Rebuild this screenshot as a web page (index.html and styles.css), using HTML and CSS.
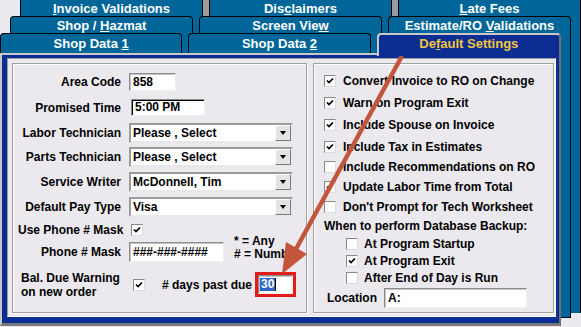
FILE: index.html
```html
<!DOCTYPE html>
<html lang="en">
<head>
  <meta charset="UTF-8" />
  <title>Default Settings</title>
  <link rel="stylesheet" href="styles.css">
</head>
<body>
  <div class="deck d1">
    <div class="tabs r1">
      <div class="tab"><u>I</u>nvoice Validations</div>
      <div class="tab">Dis<u>c</u>laimers</div>
      <div class="tab"><u>L</u>ate Fees</div>
    </div>
    <div class="sheet">
      <div class="deck d2">
        <div class="tabs r2">
          <div class="tab">Shop / <u>H</u>azmat</div>
          <div class="tab">Screen Vie<u>w</u></div>
          <div class="tab">Estimate/RO <u>V</u>alidations</div>
        </div>
        <div class="sheet sheet2">
          <div class="deck d3">
            <div class="tabs r3">
              <div class="tab">Shop Data <u>1</u></div>
              <div class="tab">Shop Data <u>2</u></div>
              <div class="tab active">De<u>f</u>ault Settings</div>
            </div>

            <div class="page">
              <div class="panel">
                <!-- left group -->
                <div class="group left">
                  <div class="lrow">
                    <span class="lab">Area Code</span>
                    <span class="field f-area">858</span>
                  </div>
                  <div class="lrow r-time">
                    <span class="lab">Promised Time</span>
                    <span class="field f-time">5:00 PM</span>
                  </div>
                  <div class="lrow r-labor">
                    <span class="lab">Labor Technician</span>
                    <span class="combo"><span>Please , Select</span><span class="drop"></span></span>
                  </div>
                  <div class="lrow r-parts">
                    <span class="lab">Parts Technician</span>
                    <span class="combo"><span>Please , Select</span><span class="drop"></span></span>
                  </div>
                  <div class="lrow r-next">
                    <span class="lab">Service Writer</span>
                    <span class="combo"><span>McDonnell, Tim</span><span class="drop"></span></span>
                  </div>
                  <div class="lrow r-next">
                    <span class="lab">Default Pay Type</span>
                    <span class="combo"><span>Visa</span><span class="drop"></span></span>
                  </div>
                  <div class="lrow r-use">
                    <span class="lab">Use Phone # Mask</span>
                    <span class="check"><svg viewBox="0 0 10 10"><path d="M2 4.5 L4 6.5 L8 2.5"/></svg></span>
                  </div>
                  <div class="lrow r-mask">
                    <span class="lab">Phone # Mask</span>
                    <span class="field f-mask">###-###-####</span>
                    <span class="notes">* = Any<br># = Number</span>
                  </div>
                  <div class="lrow r-bal">
                    <span class="lab">Bal. Due Warning<br>on new order</span>
                    <span class="check"><svg viewBox="0 0 10 10"><path d="M2 4.5 L4 6.5 L8 2.5"/></svg></span>
                    <span class="days"># days past due</span>
                    <span class="mark"><span class="field f-days"><span class="sel">30</span><span class="caret"></span></span></span>
                  </div>
                </div>

                <!-- right group -->
                <div class="group right">
                  <div class="crow h22"><span class="check"><svg viewBox="0 0 10 10"><path d="M2 4.5 L4 6.5 L8 2.5"/></svg></span>Convert Invoice to RO on Change</div>
                  <div class="crow h22"><span class="check"><svg viewBox="0 0 10 10"><path d="M2 4.5 L4 6.5 L8 2.5"/></svg></span>Warn on Program Exit</div>
                  <div class="crow h22"><span class="check"><svg viewBox="0 0 10 10"><path d="M2 4.5 L4 6.5 L8 2.5"/></svg></span>Include Spouse on Invoice</div>
                  <div class="crow h21"><span class="check"><svg viewBox="0 0 10 10"><path d="M2 4.5 L4 6.5 L8 2.5"/></svg></span>Include Tax in Estimates</div>
                  <div class="crow h20"><span class="check"></span>Include Recommendations on RO</div>
                  <div class="crow h20"><span class="check"><svg viewBox="0 0 10 10"><path d="M2 4.5 L4 6.5 L8 2.5"/></svg></span>Update Labor Time from Total</div>
                  <div class="crow h20"><span class="check"></span>Don't Prompt for Tech Worksheet</div>
                  <div class="head">When to perform Database Backup:</div>
                  <div class="crow sub h17"><span class="check"></span>At Program Startup</div>
                  <div class="crow sub h17"><span class="check"><svg viewBox="0 0 10 10"><path d="M2 4.5 L4 6.5 L8 2.5"/></svg></span>At Program Exit</div>
                  <div class="crow sub h18"><span class="check"></span>After End of Day is Run</div>
                  <div class="loc">
                    <span>Location</span>
                    <span class="field f-loc">A:</span>
                  </div>
                </div>
              </div>
            </div>
          </div>
        </div>
      </div>
    </div>
  </div>

  <svg class="arrow" viewBox="0 0 581 327">
    <line x1="402" y1="56" x2="296" y2="249" />
    <polygon points="282,274 307,254 286,242" />
  </svg>
</body>
</html>
```

FILE: styles.css
```css
html, body {
  margin: 0;
  overflow: hidden;
}

body {
  position: relative;
  width: 581px;
  height: 327px;
  background: #ebeaef;
  color: #000;
  font: bold 12px "Liberation Sans", Arial, sans-serif;
}

/* stacked tab rows */
.deck {
  width: 561px;
}

.d1 {
  margin-left: 20px;
}

.d2, .d3 {
  margin-left: -10px;
}

.tabs {
  display: flex;
  gap: 6px;
  align-items: flex-start;
}

.tab {
  flex: 1;
  box-sizing: border-box;
  background: #006699;
  color: #fff;
  font-size: 13px;
  line-height: 16px;
  text-align: center;
  white-space: nowrap;
  border: 1px solid #000;
  border-bottom: 0;
  border-radius: 4px 4px 0 0;
}

.r1 {
  background: #9c9c9c;
}

.r1 .tab {
  height: 16px;
  border-top: 0;
  border-radius: 0;
  padding-top: 1px;
}

.r2 .tab {
  height: 17px;
  padding-top: 1px;
}

.r3 .tab {
  height: 20px;
  padding-top: 2px;
}

.r3 .active {
  position: relative;
  z-index: 1;
  height: 23px;
  margin-bottom: -3px;
  padding-top: 1px;
  background: #0b2d94;
  color: #f4c43c;
  border: 2px solid;
  border-color: #c8c8c8 #6e6e6e transparent #c8c8c8;
  border-bottom: 0;
}

.sheet {
  box-sizing: border-box;
  height: 297px;
  background: #006699;
  border-right: 1px solid #000;
}

.sheet2 {
  height: 285px;
  border-bottom: 1px solid #000;
}

/* front page */
.page {
  box-sizing: border-box;
  height: 273px;
  background: #0b2d94;
  border-style: solid;
  border-width: 2px 2px 3px 2px;
  border-color: #c8c8c8 #6e6e6e #7a7a7a #c8c8c8;
  padding: 3px 3px 6px 5px;
}

.panel {
  box-sizing: border-box;
  height: 259px;
  display: flex;
  gap: 6px;
  padding: 4px 1px 3px 4px;
  background: #ebe9ee;
  border: 1px solid;
  border-color: #9c9c9c #fff #fff #9c9c9c;
}

.group {
  box-sizing: border-box;
  height: 250px;
  border: 1px solid #a0a0a0;
  box-shadow: inset 1px 1px #fff, 1px 1px #fff;
}

.left {
  width: 295px;
  padding-top: 9px;
}

.right {
  width: 241px;
  padding-top: 6px;
}

/* left group rows */
.lrow {
  display: flex;
  align-items: center;
}

.lab {
  width: 108px;
  margin-right: 8px;
  text-align: right;
  white-space: nowrap;
}

.r-time { margin-top: 8px; }
.r-labor { margin-top: 7px; }
.r-parts { margin-top: 4px; }
.r-next { margin-top: 5px; }

.r-use {
  height: 18px;
  margin-top: 4px;
}

.r-use .lab {
  width: auto;
  padding-left: 5px;
  text-align: left;
}

.r-mask { margin-top: 3px; }

.r-bal {
  height: 25px;
  margin-top: 10px;
}

.r-bal .lab {
  box-sizing: border-box;
  padding-left: 8px;
  text-align: left;
  line-height: 14px;
}

.r-bal .check {
  margin-left: 4px;
}

.days {
  margin-left: 17px;
}

.mark {
  margin-left: 3px;
  border: 3px solid #e41b1b;
  display: flex;
}

.notes {
  align-self: flex-start;
  margin: -7px 0 0 10px;
  line-height: 13px;
}

/* inputs */
.field {
  box-sizing: border-box;
  height: 20px;
  padding: 0 3px;
  background: #fff;
  border: 1px solid;
  border-color: #8c8c8c #f0f0f0 #f0f0f0 #8c8c8c;
  box-shadow: inset 1px 1px #c4c4c4;
  line-height: 18px;
  white-space: nowrap;
  overflow: hidden;
}

.f-area {
  width: 47px;
  height: 18px;
  line-height: 16px;
}

.f-time {
  width: 74px;
  height: 17px;
  margin-left: 2px;
  line-height: 15px;
  box-shadow: inset 1px 1px #000;
}

.f-mask { width: 95px; }

.f-days {
  display: flex;
  align-items: center;
  width: 35px;
  height: 19px;
  padding: 0 1px;
}

.sel {
  padding: 0 1px;
  line-height: 13px;
  background: #3166c8;
  color: #fff;
}

.caret {
  width: 1px;
  height: 13px;
  background: #000;
}

.f-loc {
  width: 143px;
  margin-left: 7px;
}

.combo {
  box-sizing: border-box;
  width: 164px;
  height: 20px;
  display: flex;
  align-items: center;
  padding-left: 2px;
  background: #fff;
  border: 2px solid;
  border-color: #9c9c9c #e8e8e8 #e8e8e8 #9c9c9c;
  white-space: nowrap;
}

.drop {
  box-sizing: border-box;
  width: 16px;
  height: 16px;
  margin-left: auto;
  display: flex;
  align-items: center;
  justify-content: center;
  background: #e4e4e4;
  border: 1px solid;
  border-color: #fff #7c7c7c #7c7c7c #fff;
}

.drop::after {
  content: "";
  border-left: 3px solid transparent;
  border-right: 3px solid transparent;
  border-top: 4px solid #000;
}

.check {
  box-sizing: border-box;
  flex: none;
  width: 12px;
  height: 12px;
  display: flex;
  align-items: center;
  justify-content: center;
  background: #fff;
  border: 1px solid;
  border-color: #8a8a8a #dcdcdc #dcdcdc #8a8a8a;
}

.check svg {
  width: 10px;
  height: 10px;
  fill: none;
  stroke: #000;
  stroke-width: 1.7;
}

/* right group rows */
.crow {
  display: flex;
  align-items: center;
  padding-left: 10px;
  white-space: nowrap;
}

.crow .check {
  margin-right: 7px;
}

.crow.sub {
  padding-left: 32px;
}

.crow.sub .check {
  margin-right: 6px;
}

.h22 { height: 22px; }
.h21 { height: 21px; }
.h20 { height: 20px; }
.h18 { height: 18px; }
.h17 { height: 17px; }

.head {
  height: 18px;
  line-height: 18px;
  padding-left: 10px;
}

.loc {
  display: flex;
  align-items: center;
  height: 22px;
  padding-left: 13px;
}

/* annotation arrow */
.arrow {
  position: absolute;
  left: 0;
  top: 0;
  width: 581px;
  height: 327px;
  pointer-events: none;
}

.arrow line {
  stroke: #c4553d;
  stroke-width: 4.5;
}

.arrow polygon {
  fill: #c4553d;
}
```
